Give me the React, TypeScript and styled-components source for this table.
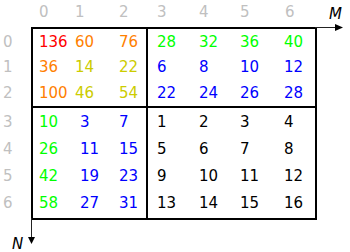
import React from "react";
import styled, { createGlobalStyle } from "styled-components";

const Global = createGlobalStyle`
  html, body { margin: 0; padding: 0; background: #ffffff; }
  body {
    font-family: "DejaVu Sans", Verdana, sans-serif;
    font-size: 15px;
    color: #000;
  }
`;

const COLORS: Record<string, string> = {
  r: "#ff0000",
  o: "#ff8000",
  y: "#cccc00",
  g: "#00ff00",
  b: "#0000ff",
  k: "#000000",
};

type Cell = [number, string];

const TL: Cell[][] = [
  [[136, "r"], [60, "o"], [76, "o"]],
  [[36, "o"], [14, "y"], [22, "y"]],
  [[100, "o"], [46, "y"], [54, "y"]],
];
const TR: Cell[][] = [
  [[28, "g"], [32, "g"], [36, "g"], [40, "g"]],
  [[6, "b"], [8, "b"], [10, "b"], [12, "b"]],
  [[22, "b"], [24, "b"], [26, "b"], [28, "b"]],
];
const BL: Cell[][] = [
  [[10, "g"], [3, "b"], [7, "b"]],
  [[26, "g"], [11, "b"], [15, "b"]],
  [[42, "g"], [19, "b"], [23, "b"]],
  [[58, "g"], [27, "b"], [31, "b"]],
];
const BR: Cell[][] = [
  [[1, "k"], [2, "k"], [3, "k"], [4, "k"]],
  [[5, "k"], [6, "k"], [7, "k"], [8, "k"]],
  [[9, "k"], [10, "k"], [11, "k"], [12, "k"]],
  [[13, "k"], [14, "k"], [15, "k"], [16, "k"]],
];

const Page = styled.div`
  display: flex;
  flex-direction: column;
  width: 350px;
  height: 252px;
`;

const HeaderRow = styled.div`
  display: grid;
  grid-template-columns: 36px 44px 38px 42px 41px 45px 1fr;
  padding-left: 39px;
  height: 27px;
  line-height: 24px;
  color: #c0c0c0;
`;

const Body = styled.div`
  display: flex;
`;

const RowLabels = styled.div`
  width: 31px;
  padding-top: 2px;
  display: flex;
  flex-direction: column;
  gap: 2px;
  color: #c0c0c0;
`;

const LabelGroup = styled.div<{ $top?: boolean }>`
  display: grid;
  height: ${(p) => (p.$top ? "77px" : "110px")};
  grid-template-rows: ${(p) => (p.$top ? "repeat(3, 1fr)" : "repeat(4, 27px)")};
  align-items: center;
  padding-left: 3px;
  line-height: 18px;
`;

const Box = styled.div`
  position: relative;
  display: grid;
  grid-template-columns: 113px 167px;
  grid-template-rows: 77px 110px;
  gap: 2px;
  background: #000;
  border: 2px solid #000;
`;

const Quadrant = styled.div<{ $cols: string; $pad: number; $top?: boolean }>`
  background: #fff;
  display: grid;
  grid-template-columns: ${(p) => p.$cols};
  grid-template-rows: ${(p) => (p.$top ? "repeat(3, 1fr)" : "repeat(4, 27px)")};
  align-items: center;
  padding-left: ${(p) => p.$pad}px;
  line-height: 18px;
`;

const Value = styled.span<{ $c: string }>`
  color: ${(p) => p.$c};
  white-space: nowrap;
`;

const AxisM = styled.div`
  position: absolute;
  left: 100%;
  top: -29px;
  width: 30px;
  display: flex;
  flex-direction: column;
  align-items: flex-end;
  padding-top: 5px;
`;

const AxisLabel = styled.span`
  font-style: italic;
  line-height: 18px;
  color: #000;
`;

const MLabel = styled(AxisLabel)`
  padding-right: 3px;
`;

const AxisN = styled.div`
  position: absolute;
  top: 100%;
  left: -24px;
  width: 30px;
  height: 32px;
`;

const NLabel = styled(AxisLabel)`
  position: absolute;
  left: 3px;
  top: 17px;
`;

const Grid = ({ data, cols, pad, top }: { data: Cell[][]; cols: string; pad: number; top?: boolean }) => (
  <Quadrant $cols={cols} $pad={pad} $top={top}>
    {data.flatMap((row, i) =>
      row.map(([v, c], j) => (
        <Value key={`${i}-${j}`} $c={COLORS[c]}>
          {v}
        </Value>
      ))
    )}
  </Quadrant>
);

export default function App() {
  return (
    <>
      <Global />
      <Page>
        <HeaderRow>
          {[0, 1, 2, 3, 4, 5, 6].map((n) => (
            <span key={n}>{n}</span>
          ))}
        </HeaderRow>
        <Body>
          <RowLabels>
            <LabelGroup $top>
              {[0, 1, 2].map((n) => (
                <span key={n}>{n}</span>
              ))}
            </LabelGroup>
            <LabelGroup>
              {[3, 4, 5, 6].map((n) => (
                <span key={n}>{n}</span>
              ))}
            </LabelGroup>
          </RowLabels>
          <Box>
            <Grid data={TL} cols="36px 44px 1fr" pad={6} top />
            <Grid data={TR} cols="42px 41px 44px 1fr" pad={9} top />
            <Grid data={BL} cols="41px 39px 1fr" pad={6} />
            <Grid data={BR} cols="42px 41px 44px 1fr" pad={9} />
            <AxisM>
              <MLabel>M</MLabel>
              <svg width="30" height="10" viewBox="0 0 30 10">
                <line x1="0" y1="4.5" x2="24" y2="4.5" stroke="#222" strokeWidth="1" />
                <polygon points="20,1 28,4.5 20,8" fill="#000" />
              </svg>
            </AxisM>
            <AxisN>
              <NLabel>N</NLabel>
              <svg width="30" height="30" viewBox="0 0 30 30">
                <line x1="22.5" y1="0" x2="22.5" y2="22" stroke="#222" strokeWidth="1" />
                <polygon points="19,19 22.5,26 26,19" fill="#000" />
              </svg>
            </AxisN>
          </Box>
        </Body>
      </Page>
    </>
  );
}
